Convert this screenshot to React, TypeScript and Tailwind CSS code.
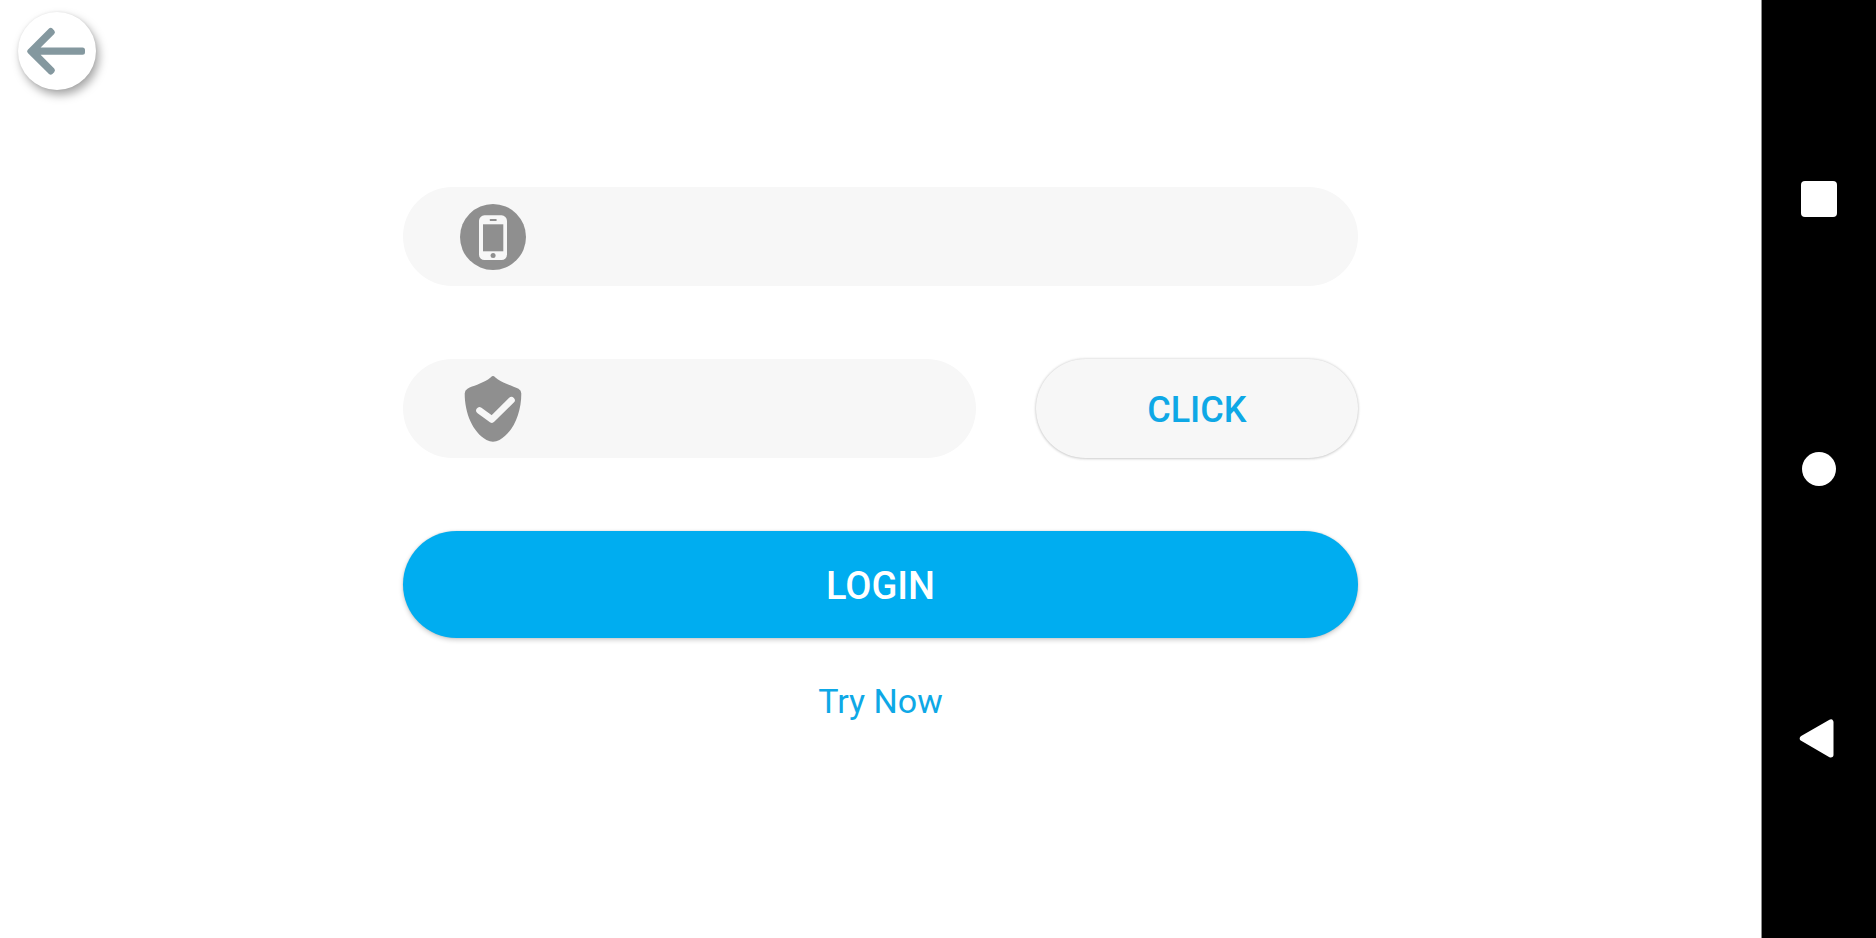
import type { FormEvent, ReactNode } from "react";

function ArrowIcon() {
  return (
    <svg viewBox="0 0 78 78" className="size-full" aria-hidden="true">
      <path
        d="M9.8 37.7 31 16.6Q32.7 15 34.4 16.6L36.2 18.4Q37.8 20.2 36.2 22L22.600 35.600H64.500Q67 35.600 67 38.100V40.300Q67 42.800 64.500 42.800H22.600L36.200 56.600Q37.800 58.400 36.200 60.200L34.400 62Q32.700 63.600 31 62L9.800 40.900Q8.300 39.300 9.800 37.700Z"
        fill="#84989f"
      />
    </svg>
  );
}

function PhoneIcon() {
  return (
    <svg viewBox="0 0 66 66" className="size-[66px] shrink-0" aria-hidden="true">
      <circle cx="33" cy="33" r="33" fill="#8f8f8f" />
      <rect x="19" y="11.3" width="28" height="44.7" rx="5.5" fill="#f7f7f7" />
      <rect x="23" y="20.3" width="20.3" height="27" fill="#8f8f8f" />
      <rect x="29.8" y="15" width="6.8" height="2" rx="0.6" fill="#8f8f8f" />
      <circle cx="33.1" cy="51.5" r="2.5" fill="#8f8f8f" />
    </svg>
  );
}

function ShieldIcon() {
  return (
    <svg viewBox="0 0 66 66" className="size-[66px] shrink-0" aria-hidden="true">
      <path
        d="M33 0C34.5 0 35.5 2 38 3.6C45 8 53 9.8 58.5 12.8Q61.3 14.3 61.3 17.5C61.3 37 53.500 56 39.500 64Q33 67.400 26.500 64C12.500 56 4.700 37 4.700 17.500Q4.700 14.300 7.500 12.800C13 9.800 21 8 28 3.600C30.500 2 31.500 0 33 0Z"
        fill="#8f8f8f"
      />
      <path
        d="M19.5 34.5 31.9 43.5 51.5 24.2"
        fill="none"
        stroke="#f7f7f7"
        strokeWidth="6.6"
        strokeLinecap="round"
        strokeLinejoin="round"
      />
    </svg>
  );
}

function Field({ id, label, type, icon }: { id: string; label: string; type: string; icon: ReactNode }) {
  return (
    <div className="flex h-[99px] w-full items-center gap-6 rounded-full bg-[#f7f7f7] pr-12 pl-[57px]">
      <label htmlFor={id} aria-label={label}>
        {icon}
      </label>
      <input
        id={id}
        type={type}
        aria-label={label}
        className="h-full min-w-0 flex-1 bg-transparent text-[34px] text-gray-700 outline-none"
      />
    </div>
  );
}

function NavigationBar() {
  return (
    <nav className="flex w-[115px] shrink-0 flex-col items-center justify-center gap-[230px] border-l border-[#8c8c8c] bg-black">
      <button type="button" aria-label="Recent apps" className="flex size-10 items-center justify-center">
        <span className="size-9 rounded-[4px] bg-white" />
      </button>
      <button type="button" aria-label="Home" className="flex size-10 items-center justify-center">
        <span className="size-[34px] rounded-full bg-white" />
      </button>
      <button type="button" aria-label="Back" className="flex size-10 items-center justify-center">
        <svg viewBox="0 0 40 40" className="size-10" aria-hidden="true">
          <path
            d="M3.5 19.4 31.8 3V35.8Z"
            fill="#fff"
            stroke="#fff"
            strokeWidth="5.4"
            strokeLinejoin="round"
          />
        </svg>
      </button>
    </nav>
  );
}

export default function App() {
  const handleSubmit = (event: FormEvent) => event.preventDefault();

  return (
    <div className="flex min-h-screen bg-white font-['Roboto',sans-serif]">
      <main className="flex min-w-0 flex-1 flex-col">
        <header className="flex px-[18px] pt-3">
          <button
            type="button"
            aria-label="Go back"
            className="size-[78px] rounded-full bg-white shadow-[3px_5px_10px_rgba(0,0,0,0.35),0_0_3px_rgba(0,0,0,0.08)]"
          >
            <ArrowIcon />
          </button>
        </header>
        <form onSubmit={handleSubmit} className="mx-auto mt-[97px] flex w-[54.2%] flex-col gap-[73px]">
          <Field id="phone" label="Phone number" type="tel" icon={<PhoneIcon />} />
          <div className="flex gap-[60px]">
            <div className="w-3/5 shrink-0">
              <Field id="code" label="Verification code" type="text" icon={<ShieldIcon />} />
            </div>
            <button
              type="button"
              className="h-[99px] min-w-0 flex-1 rounded-full bg-[#f7f7f7] pt-[3px] text-[36px] font-medium text-[#0ea8e6] shadow-[0_0_3px_rgba(0,0,0,0.18),0_1px_3px_rgba(0,0,0,0.12)]"
            >
              CLICK
            </button>
          </div>
          <button
            type="submit"
            className="h-[107px] rounded-full bg-[#00adf0] pt-[3px] text-[38px] font-medium text-white shadow-[0_0_2px_rgba(0,0,0,0.12),0_2px_5px_rgba(0,0,0,0.2)]"
          >
            LOGIN
          </button>
        </form>
        <div className="mt-[39px] flex justify-center">
          <a href="#try" className="text-[34px] leading-[48px] text-[#0ea8e6]">
            Try Now
          </a>
        </div>
      </main>
      <NavigationBar />
    </div>
  );
}
